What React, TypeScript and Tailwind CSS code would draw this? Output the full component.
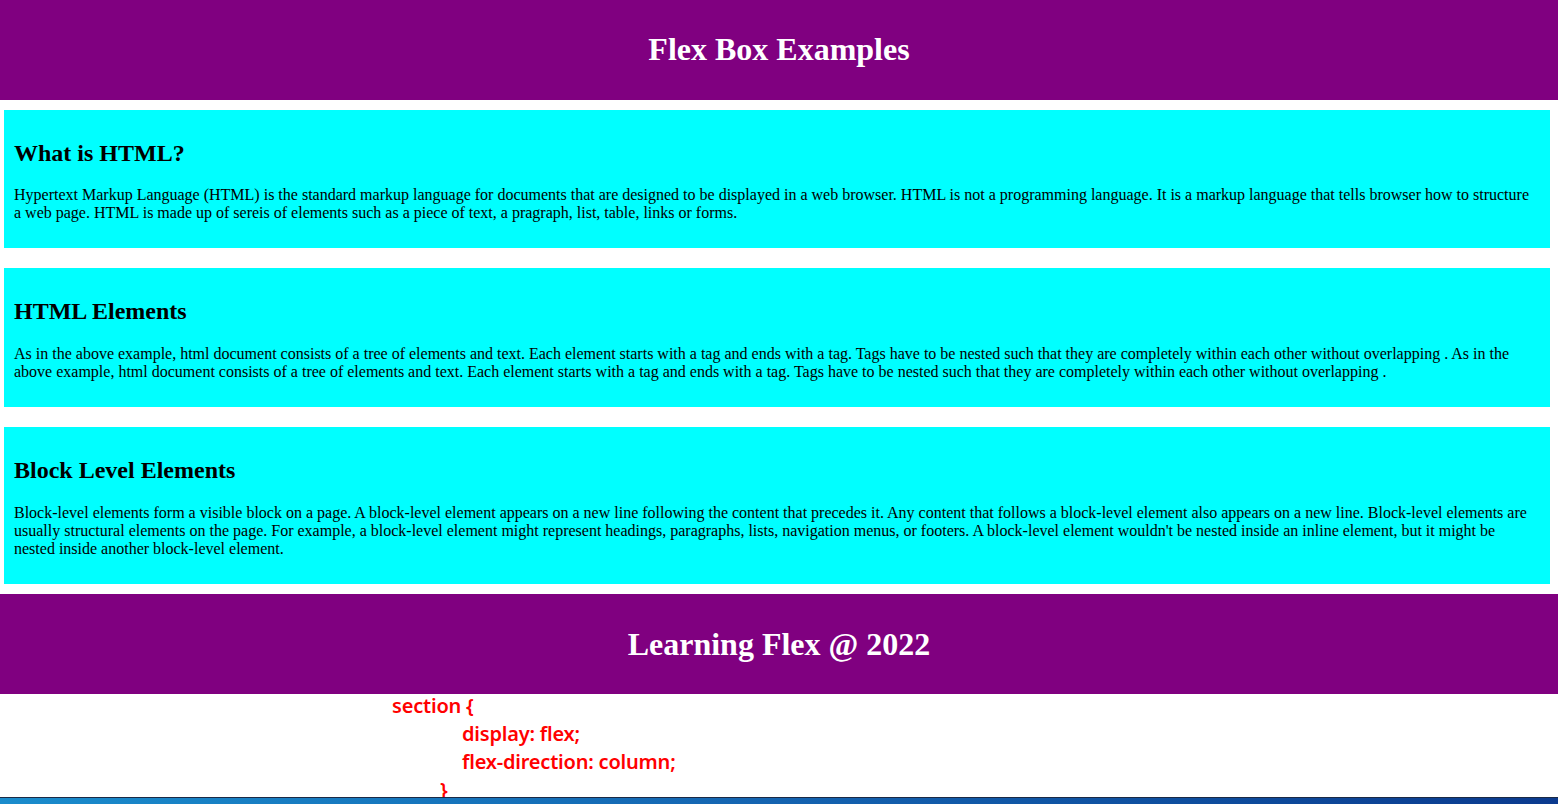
const sections = [
  {
    title: "What is HTML?",
    body: "Hypertext Markup Language (HTML) is the standard markup language for documents that are designed to be displayed in a web browser. HTML is not a programming language. It is a markup language that tells browser how to structure a web page. HTML is made up of sereis of elements such as a piece of text, a pragraph, list, table, links or forms.",
  },
  {
    title: "HTML Elements",
    body: "As in the above example, html document consists of a tree of elements and text. Each element starts with a tag and ends with a tag. Tags have to be nested such that they are completely within each other without overlapping . As in the above example, html document consists of a tree of elements and text. Each element starts with a tag and ends with a tag. Tags have to be nested such that they are completely within each other without overlapping .",
  },
  {
    title: "Block Level Elements",
    body: "Block-level elements form a visible block on a page. A block-level element appears on a new line following the content that precedes it. Any content that follows a block-level element also appears on a new line. Block-level elements are usually structural elements on the page. For example, a block-level element might represent headings, paragraphs, lists, navigation menus, or footers. A block-level element wouldn't be nested inside an inline element, but it might be nested inside another block-level element.",
  },
];

function Banner({ text }: { text: string }) {
  return (
    <div className="bg-[#800080] p-[10px] text-center">
      <h1 className="my-[21.44px] text-[32px] leading-[36.8px] font-bold text-white">{text}</h1>
    </div>
  );
}

export default function App() {
  return (
    <div className="min-h-[804px] bg-white font-['Liberation_Serif','Times_New_Roman',serif] text-black">
      <div className="flex flex-col">
        <Banner text="Flex Box Examples" />
        {sections.map((s) => (
          <section key={s.title} className="my-[10px] ml-[4px] mr-[8px] bg-[#00ffff] p-[10px]">
            <h2 className="my-[19.92px] text-[24px] leading-[27px] font-bold">{s.title}</h2>
            <p className="my-[16px] text-[16px] leading-[18px]">{s.body}</p>
          </section>
        ))}
        <Banner text="Learning Flex @ 2022" />
      </div>

      {/* css snippet pasted under the page */}
      <div className="mt-[-2px] h-[105px] overflow-hidden font-['Noto_Sans',sans-serif] text-[20px] leading-[28px] font-semibold tracking-[-0.2px] text-[#ff0000]">
        <div className="pl-[392px]">section {"{"}</div>
        <div className="pl-[462px]">display: flex;</div>
        <div className="pl-[462px]">flex-direction: column;</div>
        <div className="pl-[440px]">{"}"}</div>
      </div>
      <div className="h-[7px] border-t border-[#1b2a45] bg-gradient-to-r from-[#1a8ccc] via-[#1463b0] to-[#0b3a8e]" />
    </div>
  );
}
